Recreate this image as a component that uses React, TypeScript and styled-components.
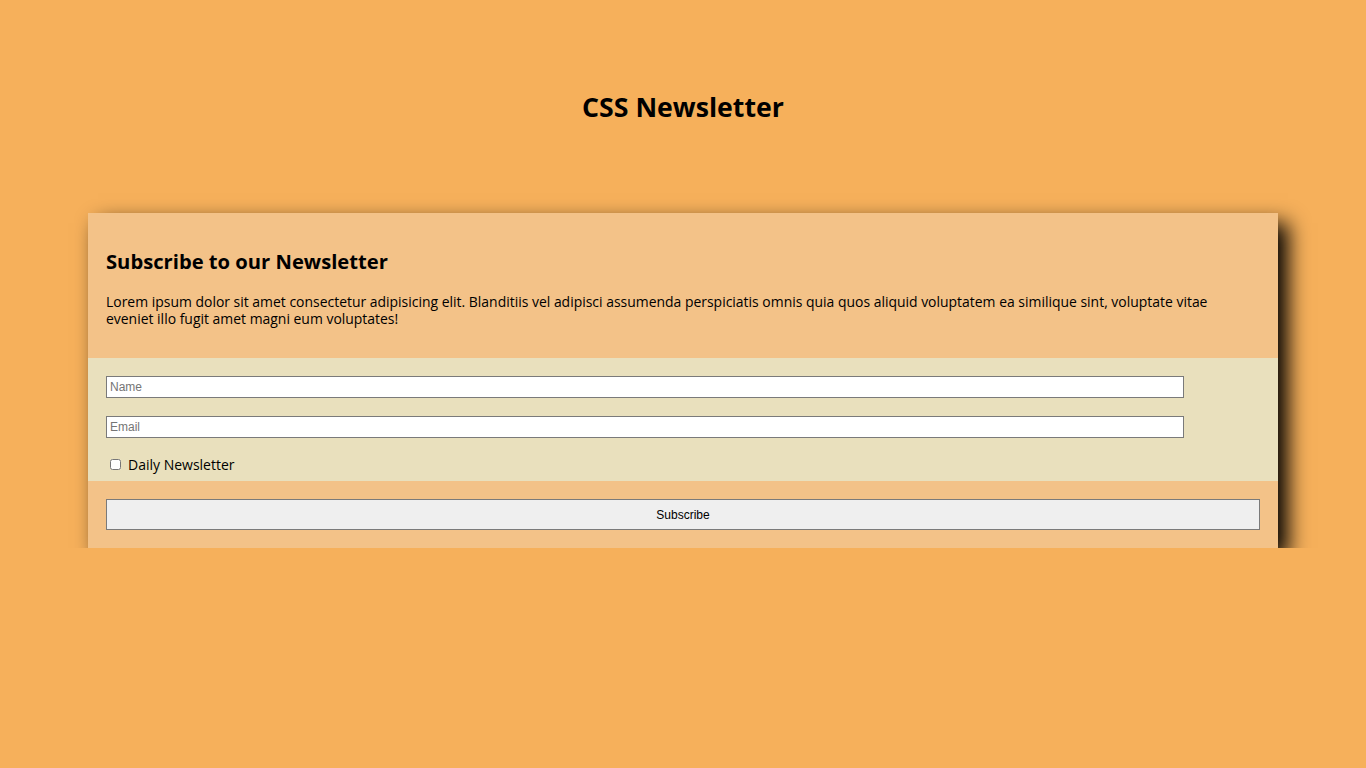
import React from 'react';
import styled, { createGlobalStyle } from 'styled-components';

const GlobalStyle = createGlobalStyle`
    body {
        margin: 0;
        background-color: #f6b05b;
        font-family: "Trebuchet MS", "Open Sans", sans-serif;
        color: #000;
    }
`;

const Page = styled.div`
    padding-top: 88px;
`;

const Title = styled.h1`
    margin: 0 0 87px;
    text-align: center;
    font-size: 26.7px;
    line-height: 38px;
    font-weight: 700;
`;

const Card = styled.div`
    width: 1190px;
    margin: 0 auto;
    box-shadow: 10px 10px 20px #000;
`;

const Intro = styled.div`
    background-color: #f3c288;
    padding: 34px 18px 31px;

    h2 {
        margin: 0 0 18px;
        font-size: 20.2px;
        line-height: 28px;
        font-weight: 700;
    }

    p {
        margin: 0 30px 0 0;
        font-size: 13.95px;
        line-height: 17px;
    }
`;

const Fields = styled.div`
    background-color: #e9e0bd;
    padding: 18px 18px 5px;
`;

const Input = styled.input<{ $gap: number }>`
    display: block;
    box-sizing: border-box;
    width: 1078px;
    height: 22px;
    margin: 0 0 ${p => p.$gap}px;
    padding: 1px 3px;
    border: 1px solid #7a7a7a;
    background: #fff;
    font-family: Arial, "Liberation Sans", sans-serif;
    font-size: 12px;

    &::placeholder {
        color: #757575;
    }
`;

const CheckRow = styled.label`
    display: flex;
    align-items: center;
    height: 24px;
    font-size: 14px;

    input {
        margin: 1px 7px 0 4px;
        width: 11px;
        height: 11px;
    }
`;

const Actions = styled.div`
    background-color: #f3c288;
    padding: 18px;
`;

const Button = styled.button`
    display: block;
    width: 100%;
    height: 31px;
    border: 1px solid #7a7a7a;
    background-color: #efefef;
    font-family: Arial, "Liberation Sans", sans-serif;
    font-size: 12px;
    color: #000;
`;

const App = () => {
    return (
        <>
            <GlobalStyle />
            <Page>
                <Title>CSS Newsletter</Title>
                <Card>
                    <Intro>
                        <h2>Subscribe to our Newsletter</h2>
                        <p>
                            Lorem ipsum dolor sit amet consectetur adipisicing elit. Blanditiis vel adipisci assumenda perspiciatis omnis quia quos aliquid voluptatem ea similique sint, voluptate vitae eveniet illo fugit amet magni eum voluptates!
                        </p>
                    </Intro>
                    <Fields>
                        <Input $gap={18} type="text" placeholder="Name" />
                        <Input $gap={14} type="email" placeholder="Email" />
                        <CheckRow>
                            <input type="checkbox" />
                            Daily Newsletter
                        </CheckRow>
                    </Fields>
                    <Actions>
                        <Button>Subscribe</Button>
                    </Actions>
                </Card>
            </Page>
        </>
    );
};

export default App;
